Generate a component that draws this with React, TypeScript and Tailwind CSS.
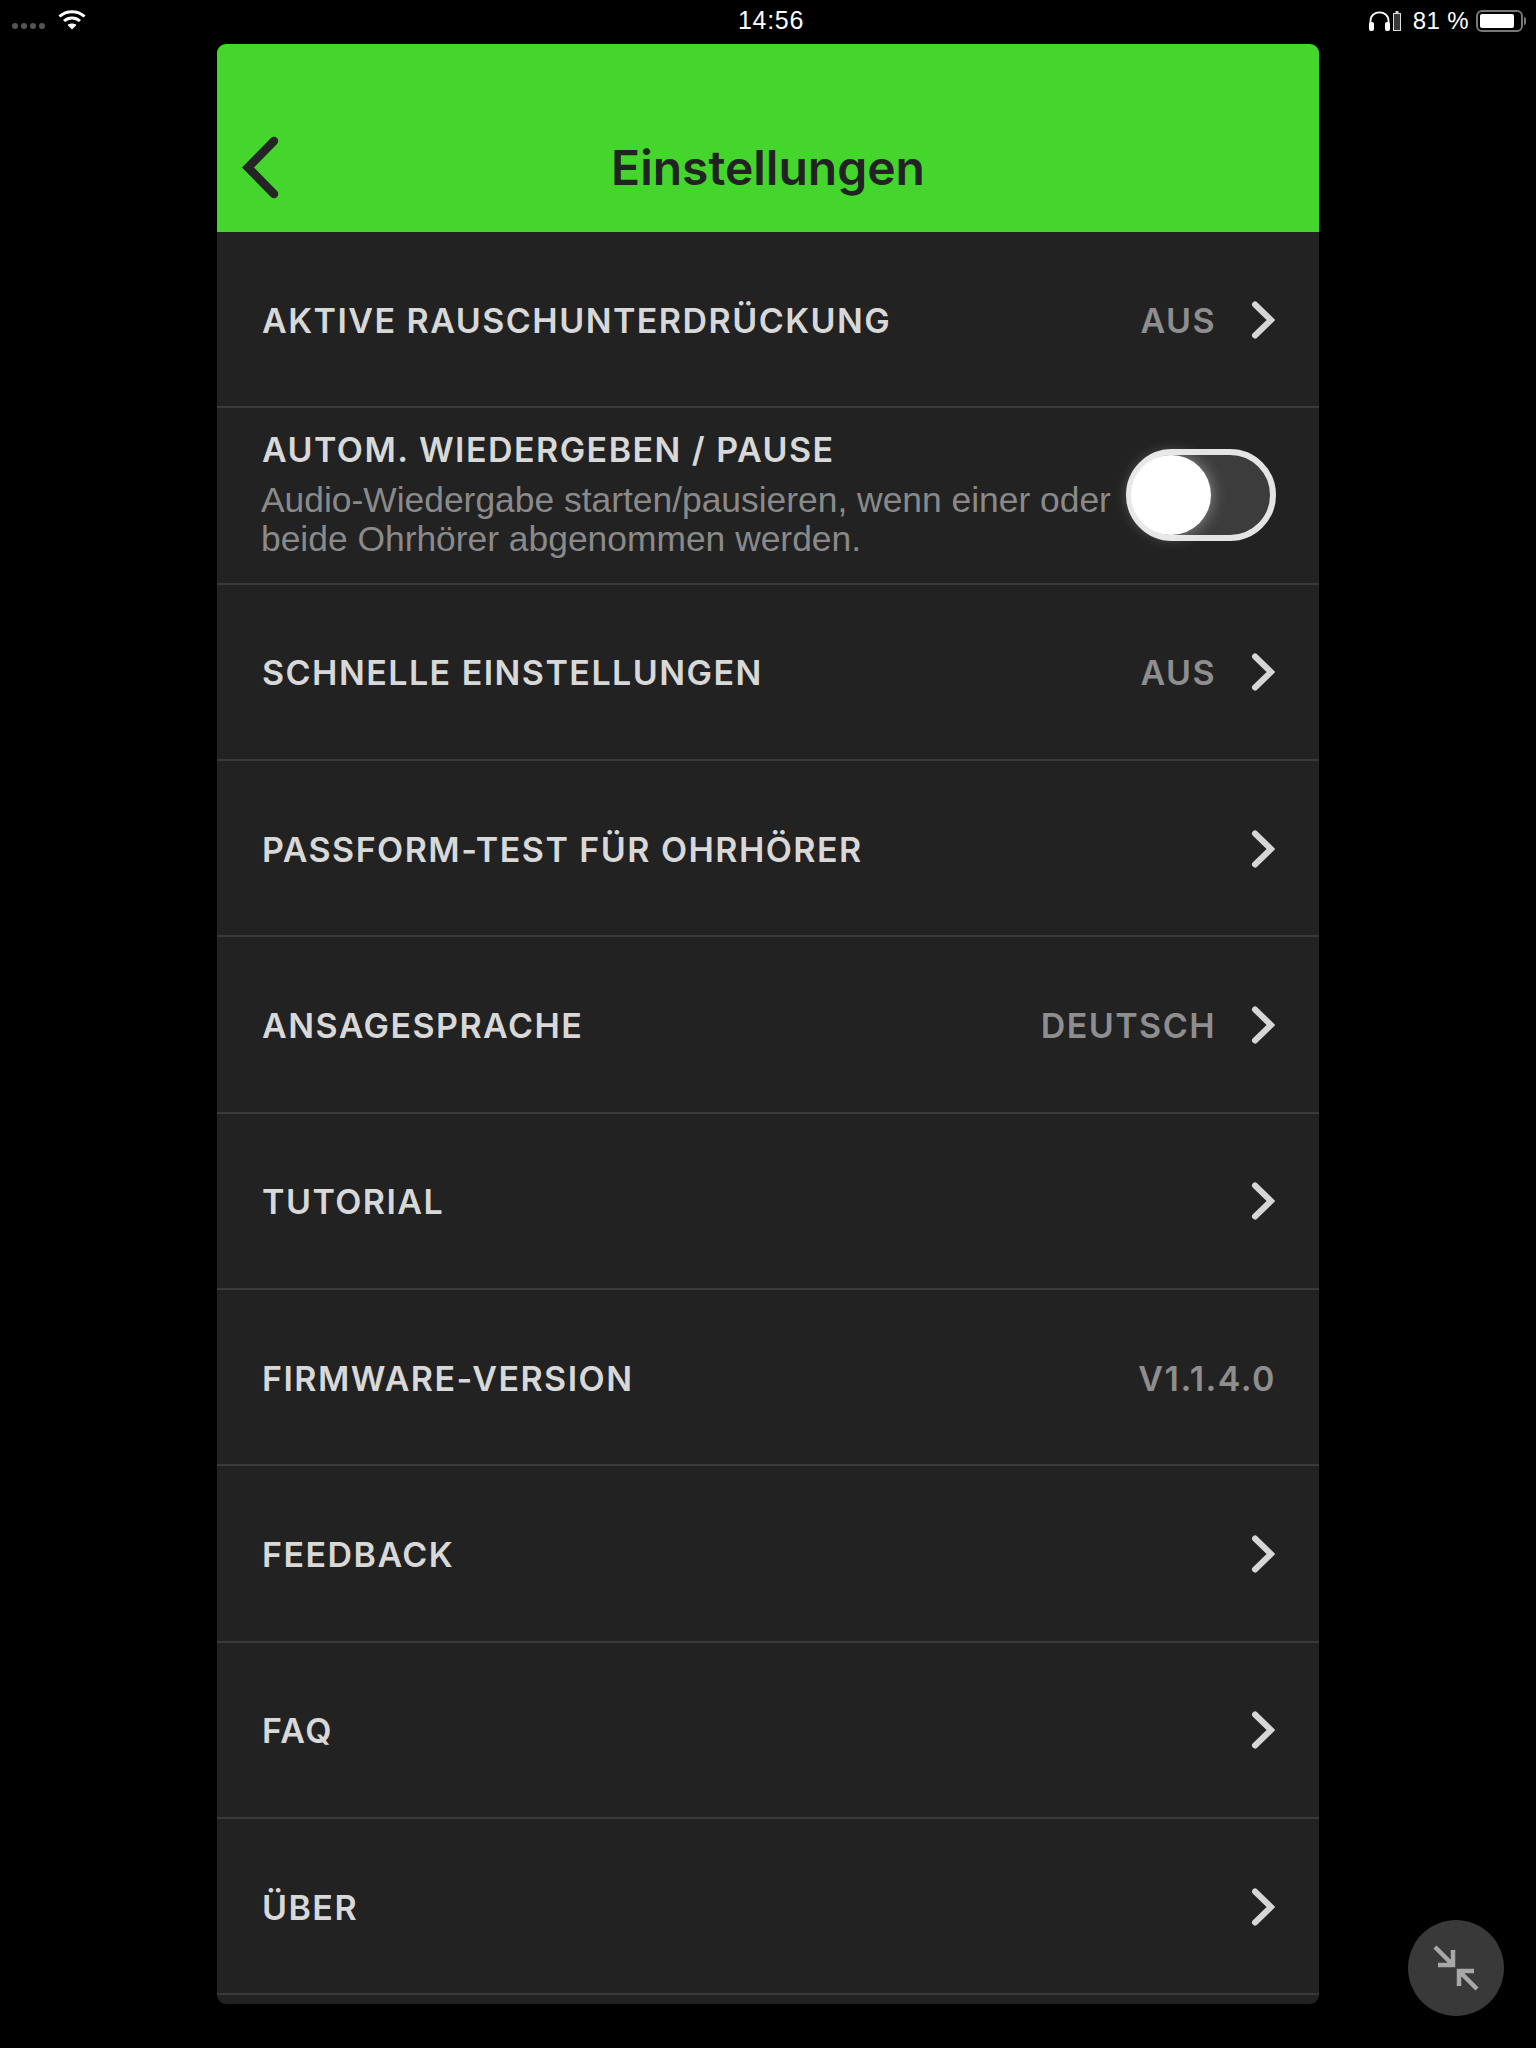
import React from "react";

const Chevron = () => (
  <svg width="24" height="38" viewBox="0 0 24 38" className="shrink-0 mt-[1px] -ml-[1px] mr-[1px]" fill="none">
    <path d="M4 3.5 L20 19 L4 34.5" stroke="#d6d6d6" strokeWidth="6" strokeLinecap="round" strokeLinejoin="miter" />
  </svg>
);

const label = "font-['Inter',sans-serif] font-semibold text-[34px] tracking-[1.46px] text-[#d8d8d8] leading-[40px]";
const value = "font-['Inter',sans-serif] font-semibold text-[34px] tracking-[1.46px] text-[#8e8e8e] leading-[40px]";

const Row = ({ title, val, chevron = true }: { title: string; val?: string; chevron?: boolean }) => (
  <div className="h-[176.33px] border-b-2 border-[#3a3a3a] flex items-center pl-[45px] pr-[43px]">
    <span className={label + " flex-1 pt-[3px]"}>{title}</span>
    {val && <span className={value + " pt-[3px]" + (chevron ? " mr-[36px]" : "")}>{val}</span>}
    {chevron && <Chevron />}
  </div>
);

export default function App() {
  return (
    <div className="relative w-full h-[2048px] bg-black overflow-hidden font-['Liberation_Sans',sans-serif]">
      <div className="h-[44px] flex items-center text-white">
        <div className="flex-1 flex items-center pl-[12px]">
          <div className="flex gap-[3px] mt-[7px]">
            <span className="w-[6px] h-[6px] rounded-full bg-[#555]" />
            <span className="w-[6px] h-[6px] rounded-full bg-[#555]" />
            <span className="w-[6px] h-[6px] rounded-full bg-[#555]" />
            <span className="w-[6px] h-[6px] rounded-full bg-[#555]" />
          </div>
          <svg width="28" height="22" viewBox="0 0 28 22" className="ml-[13px] -mt-[4px]" fill="none">
            <path d="M1.5 7.5 C8.5 1 19.5 1 26.5 7.5" stroke="#fff" strokeWidth="3" />
            <path d="M6 12 C10.5 8 17.5 8 22 12" stroke="#fff" strokeWidth="3" />
            <path d="M14 20.5 L9.5 16 C12 14 16 14 18.5 16 Z" fill="#fff" />
          </svg>
        </div>
        <div className="text-[25px] tracking-[0.7px] ml-[4px] -mt-[2px]">14:56</div>
        <div className="flex-1 flex items-center justify-end pr-[10px]">
          <svg width="23" height="22" viewBox="0 0 23 22" fill="none" className="-mt-[2px]">
            <path d="M2.5 19 V11 C2.5 -0.5 20.5 -0.5 20.5 11 V19" stroke="#fff" strokeWidth="1.8" />
            <rect x="1" y="12" width="5" height="9" rx="2" fill="#fff" />
            <rect x="17" y="12" width="5" height="9" rx="2" fill="#fff" />
          </svg>
          <svg width="9" height="20" viewBox="0 0 9 20" fill="none" className="ml-[2px] -mt-[2px]">
            <rect x="0.5" y="2.5" width="7" height="17" stroke="#ddd" strokeWidth="1" />
            <rect x="2.5" y="0" width="3" height="2" fill="#ddd" />
            <rect x="1" y="3" width="6" height="16" fill="#3a3a3a" />
          </svg>
          <span className="text-[24px] ml-[11px] tracking-[0.4px] -mt-[2px]">81 %</span>
          <div className="ml-[7px] w-[47px] h-[22px] rounded-[6px] border-2 border-[#777] p-[2px] -mt-[2px]">
            <div className="w-[34px] h-full bg-white rounded-[2px]" />
          </div>
          <div className="w-[2px] h-[8px] bg-[#777] rounded-r-[2px] ml-[1px] -mt-[2px]" />
        </div>
      </div>

      <div className="w-[1102px] mx-auto rounded-[9px] overflow-hidden bg-[#222222] h-[1960px]">
        <div className="relative h-[188px] bg-[#44d62c] flex items-end justify-center pb-[36px]">
          <svg width="40" height="66" viewBox="0 0 40 66" fill="none" className="absolute left-[24px] top-[91px]">
            <path d="M33 6 L7 32.5 L33 59" stroke="#252525" strokeWidth="8.5" strokeLinecap="round" />
          </svg>
          <span className="font-['Inter',sans-serif] font-semibold text-[48px] leading-[56px] text-[#222]">Einstellungen</span>
        </div>

        <Row title="AKTIVE RAUSCHUNTERDRÜCKUNG" val="AUS" />

        <div className="h-[176.33px] border-b-2 border-[#3a3a3a] flex items-center pl-[45px] pr-[43px]">
          <div className="flex-1 min-w-0">
            <div className={label + " -mt-[2px] mb-[11px]"}>AUTOM. WIEDERGEBEN / PAUSE</div>
            <div className="text-[35.4px] leading-[39px] text-[#8a8a8a] whitespace-nowrap -ml-[1px]">
              Audio-Wiedergabe starten/pausieren, wenn einer oder
              <br />
              beide Ohrhörer abgenommen werden.
            </div>
          </div>
          <div className="relative w-[150px] h-[92px] rounded-full border-[6px] border-[#e4e4e4] bg-[#3c3c3c] shrink-0 -mt-[1px]">
            <div className="absolute -left-[1px] top-[0px] w-[80px] h-[80px] rounded-full bg-white shadow-[0_0_16px_rgba(255,255,255,0.45)]" />
          </div>
        </div>

        <Row title="SCHNELLE EINSTELLUNGEN" val="AUS" />
        <Row title="PASSFORM-TEST FÜR OHRHÖRER" />
        <Row title="ANSAGESPRACHE" val="DEUTSCH" />
        <Row title="TUTORIAL" />
        <Row title="FIRMWARE-VERSION" val="V1.1.4.0" chevron={false} />
        <Row title="FEEDBACK" />
        <Row title="FAQ" />
        <Row title="ÜBER" />
      </div>

      <div className="absolute left-[1408px] top-[1920px] w-[96px] h-[96px] rounded-full bg-[#393939] flex items-center justify-center">
        <svg width="46" height="46" viewBox="0 0 46 46" fill="none" stroke="#a8a8a8" strokeWidth="4.5">
          <path d="M2 2 L20 20 M20 5 V20 H5" />
          <path d="M44 44 L26 26 M26 41 V26 H41" />
        </svg>
      </div>
    </div>
  );
}
